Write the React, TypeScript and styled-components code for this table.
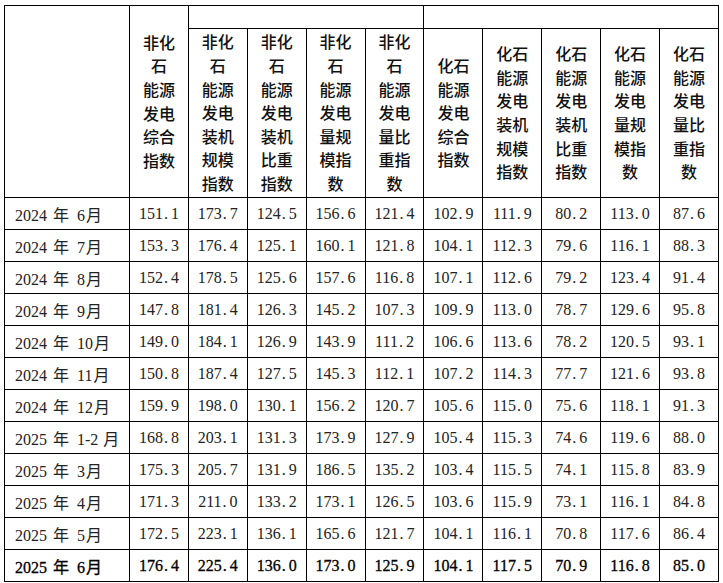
import React from "react";
import styled, { createGlobalStyle } from "styled-components";

const GlobalStyle = createGlobalStyle`
  html, body { margin: 0; padding: 0; background: #fff; }
`;

const Page = styled.div`
  padding: 5px 0 0 4px;
`;

const Table = styled.table`
  border-collapse: collapse;
  table-layout: fixed;
  width: 714px;
`;

const Col = styled.col<{ $w: number }>`
  width: ${(p) => p.$w}px;
`;

const HeadCell = styled.th<{ $h?: number }>`
  border: 1.5px solid #000;
  padding: 0;
  height: ${(p) => (p.$h ? `${p.$h}px` : "auto")};
  vertical-align: middle;
  text-align: center;
  font-family: "Noto Sans CJK SC", sans-serif;
  font-size: 16px;
  font-weight: 500;
  line-height: 23.6px;
  color: #111;
`;

const Line = styled.div`
  white-space: nowrap;
`;

const DataRow = styled.tr<{ $bold?: boolean }>`
  color: ${(p) => (p.$bold ? "#000" : "#222")};
  -webkit-text-stroke: ${(p) => (p.$bold ? "0.3px #000" : "0")};
`;

const LabelCell = styled.td`
  border: 1.5px solid #000;
  height: 31px;
  padding: 0 0 0 10px;
  text-align: left;
  vertical-align: middle;
  font-family: "Liberation Serif", "Noto Sans CJK SC", serif;
  font-size: 16px;
  white-space: nowrap;
`;

const Unit = styled.span<{ $l: number; $r: number }>`
  font-family: "Noto Sans CJK SC", sans-serif;
  font-weight: 400;
  margin-left: ${(p) => p.$l}px;
  margin-right: ${(p) => p.$r}px;
`;

const NumCell = styled.td`
  border: 1.5px solid #000;
  height: 31px;
  padding: 0;
  text-align: center;
  vertical-align: middle;
  font-family: "Liberation Serif", serif;
  font-size: 16px;
  white-space: nowrap;
`;

const Dot = styled.span`
  display: inline-block;
  width: 8px;
  padding-left: 1px;
  box-sizing: border-box;
  text-align: left;
`;

const nonFossil: string[][] = [
  ["非化", "石", "能源", "发电", "装机", "规模", "指数"],
  ["非化", "石", "能源", "发电", "装机", "比重", "指数"],
  ["非化", "石", "能源", "发电", "量规", "模指", "数"],
  ["非化", "石", "能源", "发电", "量比", "重指", "数"],
];

const fossil: string[][] = [
  ["化石", "能源", "发电", "综合", "指数"],
  ["化石", "能源", "发电", "装机", "规模", "指数"],
  ["化石", "能源", "发电", "装机", "比重", "指数"],
  ["化石", "能源", "发电", "量规", "模指", "数"],
  ["化石", "能源", "发电", "量比", "重指", "数"],
];

type Row = { year: string; month: string; values: string[]; bold?: boolean };

const rows: Row[] = [
  { year: "2024", month: "6", values: ["151.1", "173.7", "124.5", "156.6", "121.4", "102.9", "111.9", "80.2", "113.0", "87.6"] },
  { year: "2024", month: "7", values: ["153.3", "176.4", "125.1", "160.1", "121.8", "104.1", "112.3", "79.6", "116.1", "88.3"] },
  { year: "2024", month: "8", values: ["152.4", "178.5", "125.6", "157.6", "116.8", "107.1", "112.6", "79.2", "123.4", "91.4"] },
  { year: "2024", month: "9", values: ["147.8", "181.4", "126.3", "145.2", "107.3", "109.9", "113.0", "78.7", "129.6", "95.8"] },
  { year: "2024", month: "10", values: ["149.0", "184.1", "126.9", "143.9", "111.2", "106.6", "113.6", "78.2", "120.5", "93.1"] },
  { year: "2024", month: "11", values: ["150.8", "187.4", "127.5", "145.3", "112.1", "107.2", "114.3", "77.7", "121.6", "93.8"] },
  { year: "2024", month: "12", values: ["159.9", "198.0", "130.1", "156.2", "120.7", "105.6", "115.0", "75.6", "118.1", "91.3"] },
  { year: "2025", month: "1-2", values: ["168.8", "203.1", "131.3", "173.9", "127.9", "105.4", "115.3", "74.6", "119.6", "88.0"] },
  { year: "2025", month: "3", values: ["175.3", "205.7", "131.9", "186.5", "135.2", "103.4", "115.5", "74.1", "115.8", "83.9"] },
  { year: "2025", month: "4", values: ["171.3", "211.0", "133.2", "173.1", "126.5", "103.6", "115.9", "73.1", "116.1", "84.8"] },
  { year: "2025", month: "5", values: ["172.5", "223.1", "136.1", "165.6", "121.7", "104.1", "116.1", "70.8", "117.6", "86.4"] },
  { year: "2025", month: "6", values: ["176.4", "225.4", "136.0", "173.0", "125.9", "104.1", "117.5", "70.9", "116.8", "85.0"], bold: true },
];

const Num: React.FC<{ v: string }> = ({ v }) => {
  const [a, b] = v.split(".");
  return (
    <>
      {a}
      <Dot>.</Dot>
      {b}
    </>
  );
};

const Lines: React.FC<{ lines: string[] }> = ({ lines }) => (
  <>
    {lines.map((l, i) => (
      <Line key={i}>{l}</Line>
    ))}
  </>
);

export default function App() {
  const colW = (714 - 125) / 10;
  return (
    <>
      <GlobalStyle />
      <Page>
        <Table>
          <colgroup>
            <Col $w={125} />
            {Array.from({ length: 10 }).map((_, i) => (
              <Col key={i} $w={colW} />
            ))}
          </colgroup>
          <thead>
            <tr>
              <HeadCell rowSpan={2} />
              <HeadCell rowSpan={2}>
                <Lines lines={["非化", "石", "能源", "发电", "综合", "指数"]} />
              </HeadCell>
              <HeadCell colSpan={4} $h={22} />
              <HeadCell colSpan={5} $h={22} />
            </tr>
            <tr>
              {nonFossil.map((l, i) => (
                <HeadCell key={`n${i}`} $h={168}>
                  <Lines lines={l} />
                </HeadCell>
              ))}
              {fossil.map((l, i) => (
                <HeadCell key={`f${i}`} $h={168}>
                  <Lines lines={l} />
                </HeadCell>
              ))}
            </tr>
          </thead>
          <tbody>
            {rows.map((r, i) => (
              <DataRow key={i} $bold={r.bold}>
                <LabelCell>
                  {r.year}
                  <Unit $l={6} $r={8}>年</Unit>
                  {r.month}
                  <Unit $l={r.month.length > 2 ? 5 : 1} $r={0}>月</Unit>
                </LabelCell>
                {r.values.map((v, j) => (
                  <NumCell key={j}>
                    <Num v={v} />
                  </NumCell>
                ))}
              </DataRow>
            ))}
          </tbody>
        </Table>
      </Page>
    </>
  );
}
